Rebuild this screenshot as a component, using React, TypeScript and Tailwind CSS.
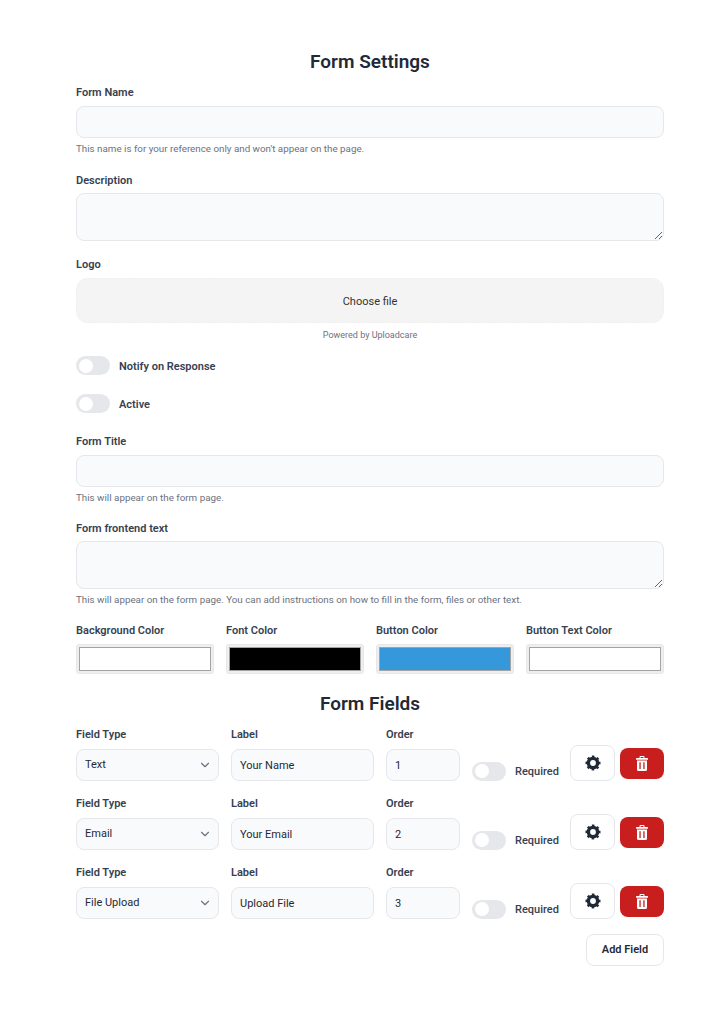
import { ChevronDown } from "lucide-react";

const inputClass =
  "w-full h-8 rounded-lg border border-[#e5e7eb] bg-[#f9fafb] px-2 text-[11px] text-[#1f2937] outline-none";
const labelClass = "block pt-px -mb-px text-[11px] leading-[15px] font-semibold text-[#374151]";
const helpClass = "pt-px -mb-px text-[9.8px] leading-[14px] text-[#6b7280]";
const headingClass = "pt-px -mb-px text-center text-[19px] leading-[28px] font-semibold text-[#1f2937]";

function Toggle() {
  return (
    <span className="flex h-[19px] w-[34px] shrink-0 items-center rounded-full bg-[#e5e7eb] pl-[3px]">
      <span className="h-[14px] w-[14px] rounded-full bg-white" />
    </span>
  );
}

function GearIcon() {
  return (
    <svg width="16" height="16" viewBox="0 0 16 16" fill="none" stroke="#1f2937">
      <circle cx="8" cy="8" r="4.6" strokeWidth="3.4" />
      <circle cx="8" cy="8" r="6.6" strokeWidth="1.8" strokeDasharray="2.6 2.58" strokeDashoffset="1.3" />
    </svg>
  );
}

function TrashIcon() {
  return (
    <svg width="12" height="15" viewBox="0 0 12 15" fill="white">
      <path d="M3.5 2.5V1a1 1 0 0 1 1-1h3a1 1 0 0 1 1 1v1.5H7.4V1.1H4.6v1.4z" />
      <rect x="0" y="2" width="12" height="1.8" rx="0.6" />
      <path
        fillRule="evenodd"
        d="M1 4.6h10v8.9a1.5 1.5 0 0 1-1.5 1.5h-7A1.5 1.5 0 0 1 1 13.5zM3.4 6.2v6.8h1.3V6.2zM7.3 6.2v6.8h1.3V6.2z"
      />
    </svg>
  );
}

function ColorField({ label, color }: { label: string; color: string }) {
  return (
    <div>
      <label className={labelClass}>{label}</label>
      <div className="mt-[7px] h-[30px] rounded-[3px] border border-[#e5e7eb] bg-[#efefef] p-[2px]">
        <div className="h-full border border-[#a3a3a3]" style={{ background: color }} />
      </div>
    </div>
  );
}

function FieldRow({ type, label, order }: { type: string; label: string; order: number }) {
  return (
    <div className="flex items-end">
      <div className="w-[143px] shrink-0">
        <label className={labelClass}>Field Type</label>
        <div className="relative mt-2">
          <select defaultValue={type} className={`${inputClass} appearance-none`}>
            <option>Text</option>
            <option>Email</option>
            <option>File Upload</option>
          </select>
          <ChevronDown size={14} strokeWidth={2} className="absolute right-[7px] top-[9px] text-[#6b7280]" />
        </div>
      </div>
      <div className="ml-3 w-[143px] shrink-0">
        <label className={labelClass}>Label</label>
        <input readOnly value={label} className={`${inputClass} mt-2`} />
      </div>
      <div className="ml-3 w-[74px] shrink-0">
        <label className={labelClass}>Order</label>
        <input readOnly value={order} className={`${inputClass} mt-2`} />
      </div>
      <div className="ml-3 flex w-[86px] shrink-0 items-center">
        <Toggle />
        <span className="ml-[9px] pt-px text-[11px] leading-[19px] font-medium text-[#374151]">Required</span>
      </div>
      <button className="ml-3 flex h-[36px] w-[45px] shrink-0 items-center justify-center rounded-lg border border-[#e5e7eb] bg-white">
        <GearIcon />
      </button>
      <button className="mb-[2px] ml-[5px] flex h-[31px] w-[44px] shrink-0 items-center justify-center rounded-lg bg-[#c81e1e]">
        <TrashIcon />
      </button>
    </div>
  );
}

export default function App() {
  return (
    <div className="min-h-[1024px] bg-white px-[76px] pt-[47px] font-['Roboto',sans-serif]">
      <div className="w-[588px]">
        <h1 className={headingClass}>Form Settings</h1>

        <label className={`${labelClass} mt-[9px]`}>Form Name</label>
        <input className={`${inputClass} mt-[7px]`} />
        <p className={`${helpClass} mt-[3px]`}>This name is for your reference only and won't appear on the page.</p>

        <label className={`${labelClass} mt-[17px]`}>Description</label>
        <textarea className={`${inputClass} mt-[6px] block h-12`} />

        <label className={`${labelClass} mt-[15px]`}>Logo</label>
        <div className="mt-[7px] flex h-[45px] items-center justify-center rounded-xl border border-dashed border-[#f0f0f0] bg-[#f4f4f4] pt-[3px] text-[11px] text-[#333]">
          Choose file
        </div>
        <p className="mt-[5px] text-center text-[9px] leading-[14px] text-[#6b7280]">Powered by Uploadcare</p>

        <div className="mt-[14px] flex items-center gap-[9px]">
          <Toggle />
          <span className={labelClass}>Notify on Response</span>
        </div>
        <div className="mt-[19px] flex items-center gap-[9px]">
          <Toggle />
          <span className={labelClass}>Active</span>
        </div>

        <label className={`${labelClass} mt-5`}>Form Title</label>
        <input className={`${inputClass} mt-[7px]`} />
        <p className={`${helpClass} mt-[3px]`}>This will appear on the form page.</p>

        <label className={`${labelClass} mt-4`}>Form frontend text</label>
        <textarea className={`${inputClass} mt-[6px] block h-12`} />
        <p className={`${helpClass} mt-[3px]`}>
          This will appear on the form page. You can add instructions on how to fill in the form, files or other text.
        </p>

        <div className="mt-4 grid grid-cols-4 gap-3">
          <ColorField label="Background Color" color="#ffffff" />
          <ColorField label="Font Color" color="#000000" />
          <ColorField label="Button Color" color="#3498db" />
          <ColorField label="Button Text Color" color="#ffffff" />
        </div>

        <h2 className={`${headingClass} mt-[15px]`}>Form Fields</h2>

        <div className="mt-[9px] flex flex-col gap-[14px]">
          <FieldRow type="Text" label="Your Name" order={1} />
          <FieldRow type="Email" label="Your Email" order={2} />
          <FieldRow type="File Upload" label="Upload File" order={3} />
        </div>

        <div className="mt-[15px] flex justify-end">
          <button className="h-8 w-[78px] rounded-lg border border-[#e5e7eb] bg-white text-[11px] font-semibold text-[#1f2937]">
            Add Field
          </button>
        </div>
      </div>
    </div>
  );
}
